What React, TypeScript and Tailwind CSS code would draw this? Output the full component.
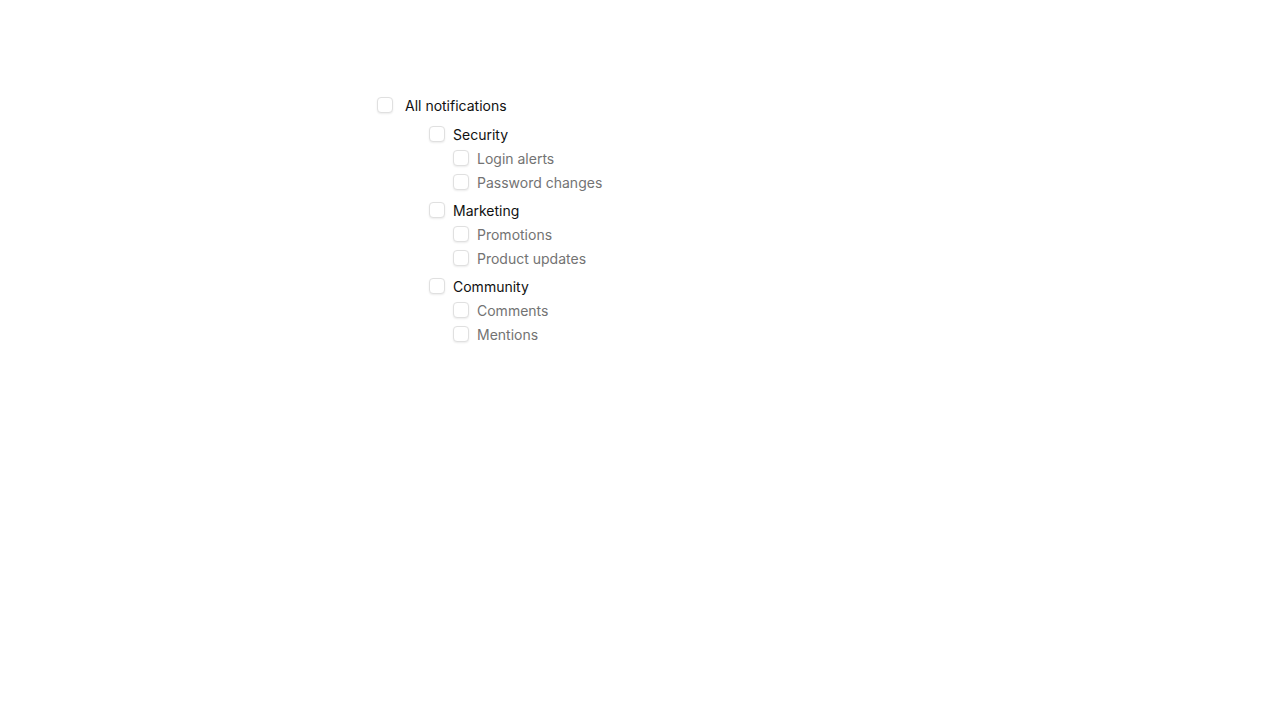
import React from 'react';

// ============================================================
// DADOS
// ============================================================

interface Group {
  label: string;
  items: string[];
}

const groups: Group[] = [
  { label: 'Security', items: ['Login alerts', 'Password changes'] },
  { label: 'Marketing', items: ['Promotions', 'Product updates'] },
  { label: 'Community', items: ['Comments', 'Mentions'] },
];

// ============================================================
// COMPONENTES
// ============================================================

function Box() {
  return (
    <span className="mt-[2px] inline-block h-4 w-4 shrink-0 rounded-[4px] border border-[#e0e0e0] bg-white shadow-[0_1px_2px_rgba(0,0,0,0.08)]" />
  );
}

function Row({ label, muted, gap }: { label: string; muted?: boolean; gap: string }) {
  return (
    <label className={`flex h-5 items-start ${gap}`}>
      <Box />
      <span className={`mt-px text-sm leading-5 ${muted ? 'text-[#737373]' : 'text-[#111111]'}`}>{label}</span>
    </label>
  );
}

export default function App() {
  return (
    <div
      className="min-h-screen bg-white pl-[377px] pt-[95px]"
      style={{ fontFamily: 'Inter, "Noto Sans", sans-serif' }}
    >
      <Row label="All notifications" gap="gap-3" />
      <div className="mt-[9px] flex flex-col gap-2 pl-[52px]">
        {groups.map((g) => (
          <div key={g.label} className="flex flex-col gap-1">
            <Row label={g.label} gap="gap-2" />
            <div className="flex flex-col gap-1 pl-6">
              {g.items.map((it) => (
                <Row key={it} label={it} muted gap="gap-2" />
              ))}
            </div>
          </div>
        ))}
      </div>
    </div>
  );
}
